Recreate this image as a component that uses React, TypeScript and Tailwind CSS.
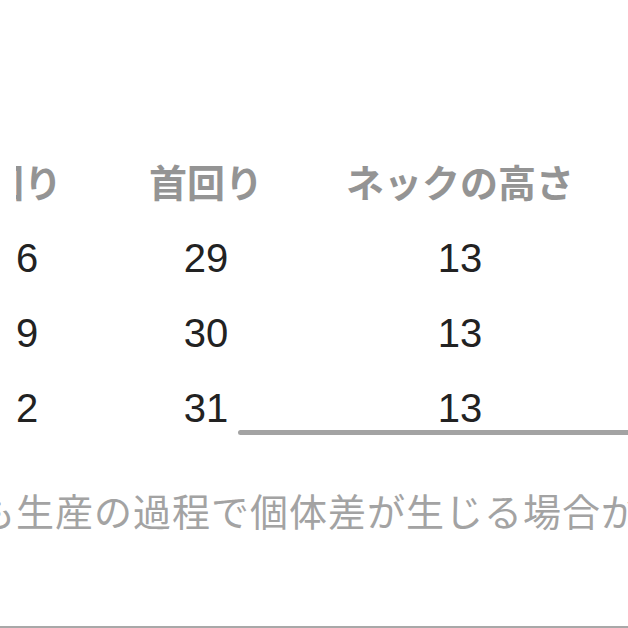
import React from 'react';

const rows = [
  { body: '6', neck: '29', height: '13' },
  { body: '9', neck: '30', height: '13' },
  { body: '2', neck: '31', height: '13' },
];

export default function App() {
  return (
    <div className="w-[628px] h-[628px] bg-white overflow-hidden flex flex-col font-['Noto_Sans_CJK_JP','Noto_Sans',sans-serif]">
      {/* サイズ表 (左端は切れている) */}
      <div className="pt-[159px] pl-[16px] grid grid-cols-[52px_276px_232px]">
        <div className="flex justify-end overflow-hidden whitespace-nowrap pr-[6px] text-[38px] leading-[44px] font-bold text-[#949494]">回り</div>
        <div className="flex justify-center whitespace-nowrap text-[38px] leading-[44px] font-bold text-[#949494]">首回り</div>
        <div className="flex justify-center whitespace-nowrap text-[38px] leading-[44px] font-bold text-[#949494]">ネックの高さ</div>
        {rows.map((r, i) => (
          <React.Fragment key={i}>
            <div className="flex h-[75px] items-end font-['Liberation_Sans',Arial,sans-serif] text-[40px] leading-none text-[#222]">{r.body}</div>
            <div className="flex h-[75px] items-end justify-center font-['Liberation_Sans',Arial,sans-serif] text-[40px] leading-none text-[#222]">{r.neck}</div>
            <div className="flex h-[75px] items-end justify-center font-['Liberation_Sans',Arial,sans-serif] text-[40px] leading-none text-[#222]">{r.height}</div>
          </React.Fragment>
        ))}
      </div>
      <div className="mt-[2px] ml-[238px] mr-[-10px] h-[5px] rounded-full bg-[#a3a3a3]" />

      {/* 注意書き */}
      <p className="mt-[53px] ml-[-23px] whitespace-nowrap tracking-[1px] text-[38px] leading-[44px] text-[#a3a3a3]">
        も生産の過程で個体差が生じる場合が
      </p>

      <div className="mt-auto h-[2px] bg-[#a8a8a8]" />
    </div>
  );
}
